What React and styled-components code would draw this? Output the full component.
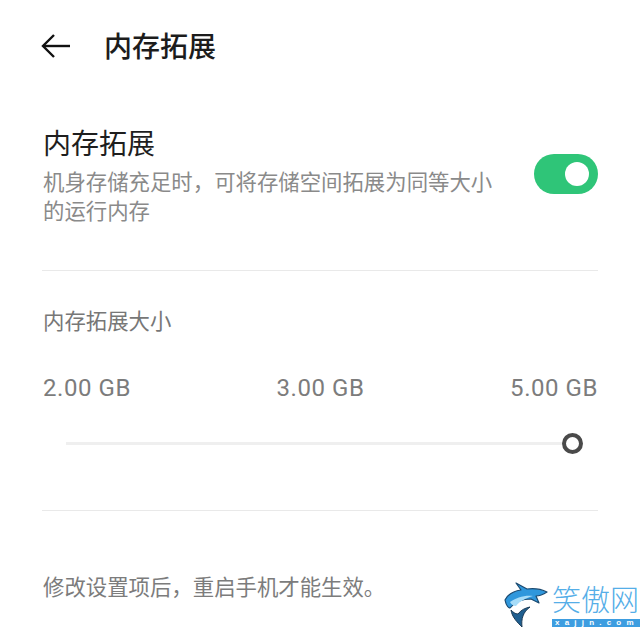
import React from 'react';
import styled, { createGlobalStyle } from 'styled-components';

const GlobalStyle = createGlobalStyle`
  html, body {
    margin: 0;
    padding: 0;
    background: #fff;
  }
  body {
    font-family: "Noto Sans CJK SC", "Noto Sans", sans-serif;
  }
`;

const Screen = styled.div`
  position: relative;
  width: 640px;
  height: 628px;
  overflow: hidden;
  background: #fff;
`;

const Header = styled.header`
  display: flex;
  align-items: center;
  height: 94px;
  padding-left: 41px;
`;

const BackIcon = styled.svg`
  width: 30px;
  height: 26px;
  margin-right: 33px;
  transform: translateY(-1px);
`;

const PageTitle = styled.h1`
  margin: -4px 0 0;
  font-size: 28px;
  font-weight: 500;
  line-height: 40px;
  color: #1c1c1c;
`;

const SwitchRow = styled.section`
  display: flex;
  align-items: flex-start;
  justify-content: space-between;
  height: 177px;
  margin: 0 42px;
  padding-top: 26px;
  box-sizing: border-box;
  border-bottom: 1px solid #e9e9e9;
`;

const SwitchText = styled.div`
  width: 456px;
  padding-left: 1px;
`;

const RowTitle = styled.div`
  font-size: 28px;
  line-height: 44px;
  color: #1e1e1e;
`;

const RowDesc = styled.div`
  font-size: 21.4px;
  line-height: 29px;
  color: #8a8a8a;
  margin-top: 2px;
`;

const Toggle = styled.div`
  position: relative;
  width: 64px;
  height: 40px;
  margin-top: 34px;
  border-radius: 20px;
  background: #2fc578;

  &::after {
    content: '';
    position: absolute;
    top: 8px;
    right: 9px;
    width: 24px;
    height: 24px;
    border-radius: 50%;
    background: #fff;
  }
`;

const SizeSection = styled.section`
  height: 240px;
  margin: 0 42px;
  padding-top: 33px;
  box-sizing: border-box;
  border-bottom: 1px solid #e9e9e9;
`;

const SectionLabel = styled.div`
  padding-left: 1px;
  font-size: 21.4px;
  line-height: 32px;
  color: #777;
`;

const TickRow = styled.div`
  display: flex;
  justify-content: space-between;
  margin-top: 36px;
  padding-left: 1px;
`;

const Tick = styled.span`
  font-family: Roboto, "Noto Sans", sans-serif;
  font-size: 24px;
  line-height: 32px;
  letter-spacing: 0.55px;
  color: #7c7c7c;
`;

const Slider = styled.div`
  position: relative;
  height: 3px;
  margin: 38px 26px 0 24px;
  background: #efefef;
`;

const Thumb = styled.div`
  position: absolute;
  right: -11px;
  top: -9px;
  width: 21px;
  height: 21px;
  box-sizing: border-box;
  border: 4px solid #4a4a4a;
  border-radius: 50%;
  background: #fff;
`;

const Footnote = styled.p`
  margin: 59px 0 0 43px;
  font-size: 21.4px;
  line-height: 32px;
  color: #7c7c7c;
`;

const Watermark = styled.div`
  position: absolute;
  left: 504px;
  top: 582px;
  display: flex;
  align-items: flex-start;
`;

const Shark = styled.svg`
  width: 44px;
  height: 46px;
`;

const Brand = styled.div`
  width: 88px;
  margin-left: 4px;
`;

const BrandName = styled.div`
  font-size: 29px;
  font-weight: 300;
  line-height: 32px;
  white-space: nowrap;
  color: #55aee8;
`;

const BrandUrl = styled.div`
  height: 8px;
  margin-top: 5px;
  font-family: "Liberation Sans", sans-serif;
  font-size: 8px;
  font-weight: 700;
  line-height: 8px;
  letter-spacing: 5.2px;
  text-indent: 3px;
  white-space: nowrap;
  color: #fff;
  background: #3d9de0;
`;

export default function App() {
  return (
    <Screen>
      <GlobalStyle />
      <Header>
        <BackIcon viewBox="0 0 30 26" fill="none" stroke="#111" strokeWidth="2.4">
          <path d="M29 13H2" />
          <path d="M13 2L2 13l11 11" />
        </BackIcon>
        <PageTitle>内存拓展</PageTitle>
      </Header>
      <SwitchRow>
        <SwitchText>
          <RowTitle>内存拓展</RowTitle>
          <RowDesc>机身存储充足时，可将存储空间拓展为同等大小的运行内存</RowDesc>
        </SwitchText>
        <Toggle />
      </SwitchRow>
      <SizeSection>
        <SectionLabel>内存拓展大小</SectionLabel>
        <TickRow>
          <Tick>2.00 GB</Tick>
          <Tick>3.00 GB</Tick>
          <Tick>5.00 GB</Tick>
        </TickRow>
        <Slider>
          <Thumb />
        </Slider>
      </SizeSection>
      <Footnote>修改设置项后，重启手机才能生效。</Footnote>
      <Watermark>
        <Shark viewBox="0 0 44 46">
          <path d="M1 18C4 12 10 9 17 8L12 1l11 6c7-1 14 0 20 3-3 2-7 4-11 4l3 7-8-4c-8 0-16 3-20 8C5 28 2 23 1 18z" fill="#2f97dc" stroke="#1b4a70" strokeWidth="1.2" strokeLinejoin="round" />
          <path d="M7 28c1 7 6 12 11 17-1-8 1-15 8-20-5 1-9 3-12 7-3 0-5-2-7-4z" fill="#1f5f90" stroke="#1b3a55" strokeWidth="1" strokeLinejoin="round" />
          <path d="M6 20c6-4 14-7 23-6-7 2-13 5-17 10-3 0-5-2-6-4z" fill="#a6dcf8" />
        </Shark>
        <Brand>
          <BrandName>笑傲网</BrandName>
          <BrandUrl>xajjn.com</BrandUrl>
        </Brand>
      </Watermark>
    </Screen>
  );
}
